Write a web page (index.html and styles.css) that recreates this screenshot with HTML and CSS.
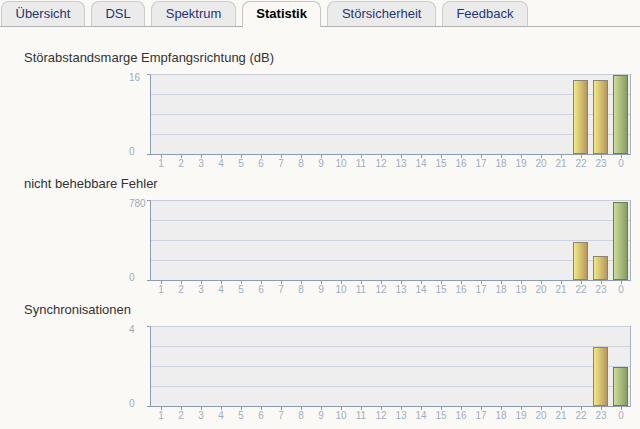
FILE: index.html
```html
<!DOCTYPE html>
<html lang="de">
<head>
<meta charset="utf-8">
<title>Statistik</title>
<link rel="stylesheet" href="styles.css">
</head>
<body>
<nav class="tabs">
  <a class="tab" href="#">Übersicht</a>
  <a class="tab" href="#">DSL</a>
  <a class="tab" href="#">Spektrum</a>
  <a class="tab active" href="#">Statistik</a>
  <a class="tab" href="#">Störsicherheit</a>
  <a class="tab" href="#">Feedback</a>
</nav>

<main class="content">
  <section class="chart">
    <h2 class="chart-title">Störabstandsmarge Empfangsrichtung (dB)</h2>
    <div class="chart-body">
      <div class="y-axis"><span>16</span><span>0</span></div>
      <div class="plot">
        <div class="bar" style="grid-column:22;height:74px"></div>
        <div class="bar" style="grid-column:23;height:74px"></div>
        <div class="bar total" style="grid-column:24;height:79px"></div>
      </div>
      <div class="x-axis">
        <span>1</span><span>2</span><span>3</span><span>4</span><span>5</span><span>6</span><span>7</span><span>8</span><span>9</span><span>10</span><span>11</span><span>12</span><span>13</span><span>14</span><span>15</span><span>16</span><span>17</span><span>18</span><span>19</span><span>20</span><span>21</span><span>22</span><span>23</span><span>0</span>
      </div>
    </div>
  </section>

  <section class="chart">
    <h2 class="chart-title">nicht behebbare Fehler</h2>
    <div class="chart-body">
      <div class="y-axis"><span>780</span><span>0</span></div>
      <div class="plot">
        <div class="bar" style="grid-column:22;height:38px"></div>
        <div class="bar" style="grid-column:23;height:24px"></div>
        <div class="bar total" style="grid-column:24;height:78px"></div>
      </div>
      <div class="x-axis">
        <span>1</span><span>2</span><span>3</span><span>4</span><span>5</span><span>6</span><span>7</span><span>8</span><span>9</span><span>10</span><span>11</span><span>12</span><span>13</span><span>14</span><span>15</span><span>16</span><span>17</span><span>18</span><span>19</span><span>20</span><span>21</span><span>22</span><span>23</span><span>0</span>
      </div>
    </div>
  </section>

  <section class="chart">
    <h2 class="chart-title">Synchronisationen</h2>
    <div class="chart-body">
      <div class="y-axis"><span>4</span><span>0</span></div>
      <div class="plot">
        <div class="bar" style="grid-column:23;height:59px"></div>
        <div class="bar total" style="grid-column:24;height:39px"></div>
      </div>
      <div class="x-axis">
        <span>1</span><span>2</span><span>3</span><span>4</span><span>5</span><span>6</span><span>7</span><span>8</span><span>9</span><span>10</span><span>11</span><span>12</span><span>13</span><span>14</span><span>15</span><span>16</span><span>17</span><span>18</span><span>19</span><span>20</span><span>21</span><span>22</span><span>23</span><span>0</span>
      </div>
    </div>
  </section>
</main>
</body>
</html>
```

FILE: styles.css
```css
* {
  box-sizing: border-box;
}

body {
  margin: 0;
  background: #faf9f6;
  font-family: "Liberation Sans", Arial, sans-serif;
}

/* Tab strip */
.tabs {
  display: flex;
  align-items: flex-end;
  gap: 6px;
  height: 27px;
  padding: 1px 0 0 1px;
  border-bottom: 1px solid #b2b2b2;
}

.tab {
  height: 25px;
  padding: 1px 13.5px 0;
  border: 1px solid #cbcbcb;
  border-bottom: none;
  border-radius: 8px 8px 0 0;
  background: #ebebeb;
  color: #1f3576;
  font-size: 13px;
  line-height: 22px;
  text-decoration: none;
  white-space: nowrap;
}

.tab.active {
  height: 26px;
  margin-bottom: -1px;
  background: #faf9f6;
  border-color: #c4c4c4;
  color: #000;
  font-weight: bold;
}

/* Charts */
.content {
  padding-top: 23px;
}

.chart-title {
  margin: 0 0 9px 24px;
  font-size: 13px;
  font-weight: normal;
  line-height: 15px;
  color: #333;
}

.chart-body {
  display: grid;
  grid-template-columns: 150px 481px;
  grid-template-rows: 81px 21px;
}

.y-axis {
  display: flex;
  flex-direction: column;
  justify-content: space-between;
  margin: -2px 0 -3px;
  padding-left: 129px;
  font-size: 10px;
  line-height: 12px;
  color: #a0a9b7;
}

.plot {
  position: relative;
  display: grid;
  grid-template-columns: repeat(24, 20px);
  align-items: end;
  border: 1px solid;
  border-color: #c6ccd8 #a8b3c5 #8d9bb0 #8d9bb0;
  background-color: #eeeeef;
  background-image: repeating-linear-gradient(to bottom, transparent 0 19px, #cdd4df 19px 20px);
}

/* small axis ticks left of the value axis */
.plot::before,
.plot::after {
  content: "";
  position: absolute;
  left: -4px;
  width: 3px;
  height: 1px;
  background: #8d9bb0;
}

.plot::before {
  top: -1px;
}

.plot::after {
  bottom: -1px;
}

.bar {
  justify-self: start;
  width: 15px;
  margin-left: 2px;
  border: 1px solid #8b8470;
  background: linear-gradient(to right, #f1e985, #d8c472 45%, #b6975f);
}

.bar.total {
  border-color: #6f7b55;
  background: linear-gradient(to right, #cadd9a, #aabd7c 50%, #8b9b62);
}

.x-axis {
  grid-column: 2;
  display: grid;
  grid-template-columns: repeat(24, 20px);
  padding: 3px 0 0 1px;
  font-size: 10px;
  line-height: 12px;
  color: #9eadc3;
  text-align: center;
  background-image: linear-gradient(to right, transparent 11px, #8d9bb0 11px 12px, transparent 12px);
  background-size: 20px 3px;
  background-repeat: repeat-x;
}
```
